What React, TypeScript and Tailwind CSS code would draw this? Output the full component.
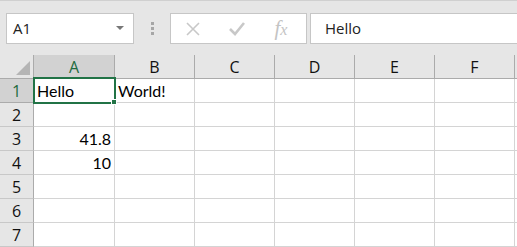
import React from 'react'

const cols = ['A', 'B', 'C', 'D', 'E', 'F']
const rows = [1, 2, 3, 4, 5, 6, 7]

const data: Record<string, { v: string; right?: boolean }> = {
  A1: { v: 'Hello' },
  B1: { v: 'World!' },
  A3: { v: '41.8', right: true },
  A4: { v: '10', right: true },
}

const ui = { fontFamily: '"Open Sans", "Noto Sans", sans-serif' }
const cellFont = { fontFamily: 'Lato, "Liberation Sans", sans-serif' }

const Toolbar = () => (
  <div className="flex items-start h-[55px] bg-[#e6e6e6] border-t border-[#d0d0d0] pt-[12px]" style={ui}>
    <div className="ml-[6px] w-[128px] h-[31px] bg-white border border-[#c6c6c6] flex items-center pl-[6px] pr-[9px]">
      <span className="text-[15px] text-[#222] flex-1">A1</span>
      <svg width="8" height="5" viewBox="0 0 8 5">
        <path d="M0 0 L8 0 L4 4 Z" fill="#777" />
      </svg>
    </div>
    <div className="w-[36px] h-[31px] flex flex-col items-center justify-center gap-[2px]">
      <div className="w-[3px] h-[3px] bg-[#a6a6a6]" />
      <div className="w-[3px] h-[3px] bg-[#a6a6a6]" />
      <div className="w-[3px] h-[3px] bg-[#a6a6a6]" />
    </div>
    <div className="w-[137px] h-[31px] bg-white border border-[#c6c6c6] flex items-center">
      <div className="w-[44px] flex justify-center">
        <svg width="14" height="14" viewBox="0 0 14 14">
          <path d="M1 1 L13 13 M13 1 L1 13" stroke="#c8c8c8" strokeWidth="1.6" />
        </svg>
      </div>
      <div className="w-[44px] flex justify-center">
        <svg width="16" height="14" viewBox="0 0 16 14">
          <path d="M1 7 L6 12 L15 1" stroke="#c8c8c8" strokeWidth="2.6" fill="none" />
        </svg>
      </div>
      <div className="w-[44px] flex justify-center">
        <span className="text-[#c4c4c4] text-[21px] italic leading-none" style={{ fontFamily: '"Liberation Serif", serif' }}>
          f<span className="text-[16px]">x</span>
        </span>
      </div>
    </div>
    <div className="ml-[3px] flex-1 h-[31px] bg-white border border-[#c6c6c6] border-r-0 flex items-center pl-[14px]">
      <span className="text-[15px] text-[#222]">Hello</span>
    </div>
  </div>
)

export default function App() {
  return (
    <div className="w-[517px] h-[247px] overflow-hidden bg-white relative">
      <Toolbar />
      <div className="grid grid-cols-[34px_81px_80px_80px_80px_80px_80px_1fr]" style={ui}>
        <div className="h-[24px] bg-[#e6e6e6] border-r border-b border-[#ababab] relative">
          <svg className="absolute right-[3px] bottom-[3px]" width="14" height="14" viewBox="0 0 14 14">
            <path d="M14 0 L14 14 L0 14 Z" fill="#b5b5b5" />
          </svg>
        </div>
        {cols.map((c) => (
          <div
            key={c}
            className={`h-[24px] border-r border-b border-[#ababab] flex items-center justify-center text-[16px] ${
              c === 'A' ? 'bg-[#d2d2d2] text-[#1e6b40] border-b-[#217346]' : 'bg-[#e6e6e6] text-[#111]'
            }`}
          >
            {c}
          </div>
        ))}
        <div className="h-[24px] bg-[#e6e6e6] border-b border-[#ababab]" />
        {rows.map((r) => (
          <React.Fragment key={r}>
            <div
              className={`h-[24px] border-r border-b flex items-center justify-center text-[16px] ${
                r === 1
                  ? 'bg-[#d2d2d2] text-[#1e6b40] border-r-[#217346] border-b-[#ababab]'
                  : 'bg-[#e6e6e6] text-[#111] border-[#ababab] border-b-[#c8c8c8]'
              }`}
            >
              {r}
            </div>
            {cols.map((c) => {
              const d = data[`${c}${r}`]
              return (
                <div
                  key={c}
                  className={`h-[24px] border-r border-b border-[#d4d4d4] flex items-center px-[3px] text-[16px] text-black whitespace-nowrap ${
                    d?.right ? 'justify-end' : ''
                  }`}
                  style={cellFont}
                >
                  {d?.v}
                </div>
              )
            })}
            <div className="h-[24px] border-b border-[#d4d4d4]" />
          </React.Fragment>
        ))}
      </div>
      <div className="absolute left-[33px] top-[77px] w-[83px] h-[27px] border-2 border-[#217346]" />
      <div className="absolute left-[111px] top-[99px] w-[6px] h-[6px] bg-[#217346] border border-white" />
    </div>
  )
}
